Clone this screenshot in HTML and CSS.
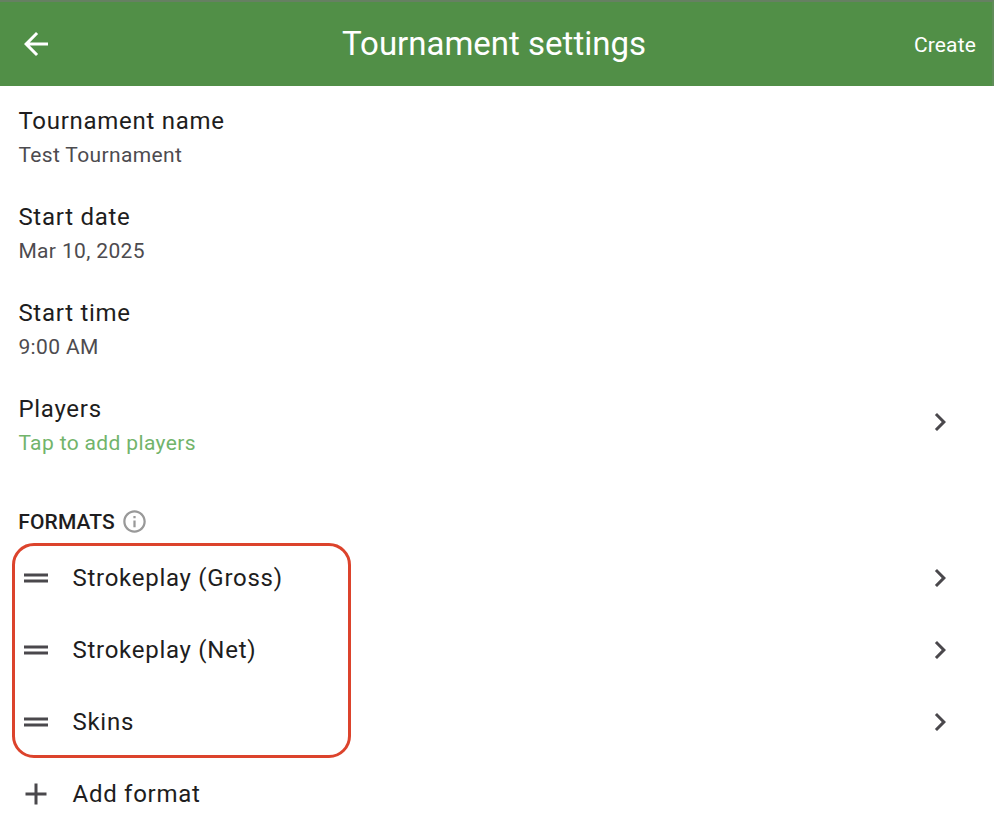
FILE: index.html
```html
<!DOCTYPE html>
<html lang="en">
<head>
<meta charset="utf-8">
<title>Tournament settings</title>
<link rel="stylesheet" href="styles.css">
</head>
<body>
<header class="bar">
  <svg class="icon back" viewBox="0 0 24 24"><path d="M20 11H7.83l5.59-5.59L12 4l-8 8 8 8 1.41-1.41L7.83 13H20v-2z"/></svg>
  <h1 class="title">Tournament settings</h1>
  <span class="create">Create</span>
</header>
<main>
  <section class="field"><div class="text"><div class="label">Tournament name</div><div class="value">Test Tournament</div></div></section>
  <section class="field"><div class="text"><div class="label">Start date</div><div class="value">Mar 10, 2025</div></div></section>
  <section class="field"><div class="text"><div class="label">Start time</div><div class="value">9:00 AM</div></div></section>
  <section class="field"><div class="text"><div class="label">Players</div><div class="value link">Tap to add players</div></div>
    <svg class="icon chevron" viewBox="0 0 24 24"><path d="M10 6L8.59 7.41 13.17 12l-4.58 4.59L10 18l6-6z"/></svg></section>
  <h2 class="heading">FORMATS
    <svg class="info" viewBox="0 0 24 24"><path d="M11 7h2v2h-2zm0 4h2v6h-2zm1-9C6.48 2 2 6.48 2 12s4.48 10 10 10 10-4.48 10-10S17.52 2 12 2zm0 18c-4.41 0-8-3.59-8-8s3.59-8 8-8 8 3.59 8 8-3.59 8-8 8z"/></svg></h2>
  <div class="formats">
    <div class="row"><svg class="icon" viewBox="0 0 24 24"><path d="M20 9H4v2h16V9zM4 15h16v-2H4v2z"/></svg><span class="label">Strokeplay (Gross)</span><svg class="icon chevron" viewBox="0 0 24 24"><path d="M10 6L8.59 7.41 13.17 12l-4.58 4.59L10 18l6-6z"/></svg></div>
    <div class="row"><svg class="icon" viewBox="0 0 24 24"><path d="M20 9H4v2h16V9zM4 15h16v-2H4v2z"/></svg><span class="label">Strokeplay (Net)</span><svg class="icon chevron" viewBox="0 0 24 24"><path d="M10 6L8.59 7.41 13.17 12l-4.58 4.59L10 18l6-6z"/></svg></div>
    <div class="row"><svg class="icon" viewBox="0 0 24 24"><path d="M20 9H4v2h16V9zM4 15h16v-2H4v2z"/></svg><span class="label">Skins</span><svg class="icon chevron" viewBox="0 0 24 24"><path d="M10 6L8.59 7.41 13.17 12l-4.58 4.59L10 18l6-6z"/></svg></div>
    <div class="outline"></div>
  </div>
  <div class="row"><svg class="icon" viewBox="0 0 24 24"><path d="M19 13h-6v6h-2v-6H5v-2h6V5h2v6h6v2z"/></svg><span class="label">Add format</span></div>
</main>
</body>
</html>
```
FILE: styles.css
```css
* { box-sizing: border-box; }
body { margin: 0; height: 838px; overflow: hidden; background: #fff; color: #1e1d20; font-family: Roboto, sans-serif; }
.bar { display: grid; grid-template-columns: 1fr auto 1fr; align-items: center; height: 86px; padding: 0 16px 0 18px; background: #518f47; border-top: 2px solid #668062; border-right: 2px solid #5f8d58; color: #fff; }
.title { margin: 0 6px 0 0; font-size: 33px; font-weight: 400; line-height: 40px; }
.create { justify-self: end; font-size: 21px; letter-spacing: .15px; padding-top: 1px; }
.icon { display: block; flex: none; width: 36px; height: 36px; fill: #4a484c; }
.back { fill: #fff; }
.field { display: flex; align-items: center; justify-content: space-between; height: 96px; padding: 0 36px 0 18px; }
.text { padding: 6px 0 0 .4px; }
.label { font-size: 24px; line-height: 36px; letter-spacing: .73px; white-space: nowrap; }
.value { font-size: 21px; line-height: 32px; letter-spacing: .36px; color: #4d4b4f; }
.value.link { color: #72b46b; }
.heading { display: flex; align-items: center; gap: 6px; height: 72px; margin: 0; padding: 31px 18px 0 18.3px; font-size: 21px; font-weight: 500; letter-spacing: .12px; }
.info { width: 27px; height: 27px; fill: #999; }
.formats { position: relative; }
.row { display: flex; align-items: center; gap: 18.5px; height: 72px; padding: 0 36px 0 18px; }
.row .chevron { margin-left: auto; }
.outline { position: absolute; left: 12px; top: 1px; width: 339px; height: 215px; border: 3px solid #dc432c; border-radius: 22px; }
```
